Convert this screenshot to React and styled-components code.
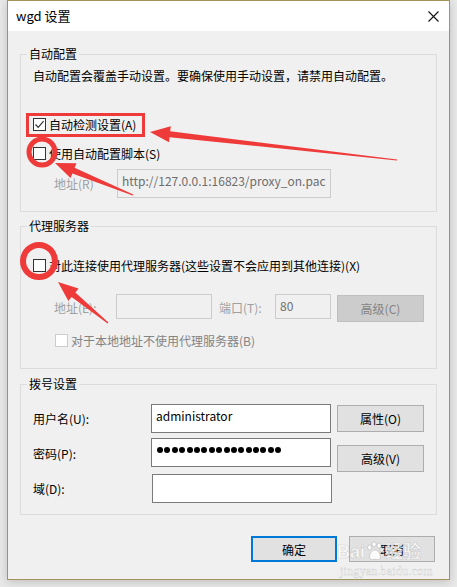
import styled, { createGlobalStyle } from 'styled-components';

const GlobalStyle = createGlobalStyle`
	html, body {
		margin: 0;
		padding: 0;
		background: #e9e9e9;
	}
	body {
		font-family: 'Segoe UI', 'Noto Sans CJK SC', sans-serif;
		font-size: 12px;
		color: #000;
	}
`;

const CheckBox = ({ checked, disabled }) => (
	<Box $disabled={disabled}>
		{checked ? (
			<svg width='11' height='11' viewBox='0 0 11 11'>
				<polyline points='1.5,5.5 4.2,8.3 9.6,2.2' fill='none' stroke='#333' strokeWidth='1.2' />
			</svg>
		) : null}
	</Box>
);

const App = () => {
	const dots = Array.from({ length: 17 });

	return (
		<>
			<GlobalStyle />
			<Page>
				<Window>
					<TitleBar>
						<Title>wgd 设置</Title>
						<Close>
							<svg width='11' height='11' viewBox='0 0 11 11'>
								<path d='M0.5,0.5 L10.5,10.5 M10.5,0.5 L0.5,10.5' stroke='#111' strokeWidth='1.1' />
							</svg>
						</Close>
					</TitleBar>
					<Body>
						<Group>
							<Legend>自动配置</Legend>
							<Note>自动配置会覆盖手动设置。要确保使用手动设置，请禁用自动配置。</Note>
							<CheckRow $top={32}>
								<CheckBox checked />
								自动检测设置(A)
							</CheckRow>
							<CheckRow $top={13}>
								<CheckBox />
								使用自动配置脚本(S)
							</CheckRow>
							<FieldRow $top={8}>
								<Label $indent={21} $width={63} $disabled>
									地址(R)
								</Label>
								<Field $width={214} $height={29} $disabled>
									http://127.0.0.1:16823/proxy_on.pac
								</Field>
							</FieldRow>
						</Group>

						<Group $top={6} $bottom={20}>
							<Legend>代理服务器</Legend>
							<CheckRow $top={23}>
								<CheckBox />
								对此连接使用代理服务器(这些设置不会应用到其他连接)(X)
							</CheckRow>
							<FieldRow $top={21}>
								<Label $indent={21} $width={63} $disabled>
									地址(E):
								</Label>
								<Field $width={96} $height={25} $disabled />
								<Label $indent={7} $width={57} $disabled>
									端口(T):
								</Label>
								<Field $width={56} $height={25} $disabled>
									80
								</Field>
								<Button $gap={6} $top={1} $disabled>
									高级(C)
								</Button>
							</FieldRow>
							<CheckRow $top={10} $indent={22} $disabled>
								<CheckBox disabled />
								对于本地地址不使用代理服务器(B)
							</CheckRow>
						</Group>

						<Group $top={7} $bottom={11}>
							<Legend>拨号设置</Legend>
							<FieldRow $top={12} $fixed>
								<Label $width={119}>用户名(U):</Label>
								<Field $width={180} $height={29}>
									administrator
								</Field>
								<Button $gap={6} $top={1}>
									属性(O)
								</Button>
							</FieldRow>
							<FieldRow $top={5} $fixed>
								<Label $width={119} $shift={2}>
									密码(P):
								</Label>
								<Field $width={180} $height={29}>
									<Dots>
										{dots.map((_, i) => (
											<Dot key={i} />
										))}
									</Dots>
								</Field>
								<Button $gap={6} $top={7}>
									高级(V)
								</Button>
							</FieldRow>
							<FieldRow $top={7} $fixed>
								<Label $width={119}>域(D):</Label>
								<Field $width={180} $height={29} />
							</FieldRow>
						</Group>

						<Footer>
							<DialogButton $primary>确定</DialogButton>
							<DialogButton>取消</DialogButton>
							<Watermark>
								<Brand>
									Bai
									<svg width='18' height='20' viewBox='0 0 20 22'>
										<g fill='rgba(255,255,255,0.85)' stroke='rgba(150,150,150,0.5)' strokeWidth='0.8'>
											<ellipse cx='4' cy='7' rx='2.3' ry='2.8' />
											<ellipse cx='9' cy='3.5' rx='2.3' ry='2.8' />
											<ellipse cx='14.5' cy='5' rx='2.3' ry='2.8' />
											<ellipse cx='17.5' cy='10' rx='2' ry='2.5' />
											<path d='M4,18 C4,12 8,10 10,10 C13,10 16,13 16,18 C16,21 13,21 10,20 C7,21 4,21 4,18 Z' />
										</g>
									</svg>
									经验
								</Brand>
								<Domain>jingyan.baidu.com</Domain>
							</Watermark>
						</Footer>
					</Body>
				</Window>

				<Marks width='457' height='587' viewBox='0 0 457 587'>
					<rect x='27.5' y='114.5' width='116' height='21' fill='none' stroke='#ef3a3a' strokeWidth='3' />
					<polygon
						fill='#ef3a3a'
						points='150,132 170.8,126.3 170.2,131.3 397.1,159.5 396.9,160.5 169.6,137.2 169,142.2'
					/>
					<circle cx='42' cy='152' r='13' fill='none' stroke='#ef3a3a' strokeWidth='5' />
					<polygon
						fill='#ef3a3a'
						points='55,163 76.5,163.2 74.6,167.8 133.3,194.4 132.7,195.6 72.4,173.4 70.5,178'
					/>
					<circle cx='39' cy='261' r='16' fill='none' stroke='#ef3a3a' strokeWidth='6' />
					<polygon
						fill='#ef3a3a'
						points='58,282 78.6,288.5 75.4,292.4 108.4,322.5 107.6,323.5 71.6,297 68.4,300.9'
					/>
				</Marks>
			</Page>
		</>
	);
};

const Page = styled.div`
	position: relative;
	width: 457px;
	height: 587px;
	overflow: hidden;
`;

const Window = styled.div`
	box-sizing: border-box;
	width: 443px;
	height: 580px;
	margin-left: 7px;
	border: 1px solid #a39458;
	background: #f0f0f0;
	box-shadow: 0 2px 9px rgba(0, 0, 0, 0.18);
	display: flex;
	flex-direction: column;
`;

const TitleBar = styled.div`
	height: 30px;
	background: #fff;
	display: flex;
	align-items: center;
	justify-content: space-between;
	padding: 0 10px 0 8px;
`;

const Title = styled.div`
	font-size: 13px;
	line-height: 16px;
	color: #000;
`;

const Close = styled.div`
	display: flex;
	align-items: center;
`;

const Body = styled.div`
	flex: 1;
	padding: 15px 12px 0 12px;
	display: flex;
	flex-direction: column;
`;

const Group = styled.fieldset`
	margin: ${({ $top }) => $top || 0}px 0 0 0;
	padding: 0 12px ${({ $bottom }) => ($bottom === undefined ? 13 : $bottom)}px 12px;
	border: 1px solid #dcdcdc;
	min-width: 0;
`;

const Legend = styled.legend`
	padding: 0 2px;
	margin-left: -6px;
	line-height: 16px;
	font-size: 12px;
	color: #000;
`;

const Note = styled.div`
	margin-top: 6px;
	line-height: 16px;
	white-space: nowrap;
`;

const CheckRow = styled.div`
	display: flex;
	align-items: center;
	gap: 3px;
	height: 16px;
	margin-top: ${({ $top }) => $top}px;
	margin-left: ${({ $indent }) => $indent || 0}px;
	white-space: nowrap;
	color: ${({ $disabled }) => ($disabled ? '#838383' : '#000')};
`;

const Box = styled.span`
	box-sizing: border-box;
	width: 13px;
	height: 13px;
	border: 1px solid ${({ $disabled }) => ($disabled ? '#cccccc' : '#333')};
	background: #fff;
	display: flex;
	align-items: center;
	justify-content: center;
	flex-shrink: 0;
`;

const FieldRow = styled.div`
	display: flex;
	align-items: ${({ $fixed }) => ($fixed ? 'center' : 'flex-start')};
	margin-top: ${({ $top }) => $top}px;
	height: ${({ $fixed }) => ($fixed ? '29px' : 'auto')};
`;

const Label = styled.div`
	box-sizing: border-box;
	width: ${({ $width }) => $width}px;
	margin-left: ${({ $indent }) => $indent || 0}px;
	padding-top: ${({ $shift }) => $shift || 0}px;
	align-self: center;
	line-height: 16px;
	white-space: nowrap;
	color: ${({ $disabled }) => ($disabled ? '#a0a0a0' : '#000')};
`;

const Field = styled.div`
	box-sizing: border-box;
	width: ${({ $width }) => $width}px;
	height: ${({ $height }) => $height}px;
	border: 1px solid ${({ $disabled }) => ($disabled ? '#cccccc' : '#7a7a7a')};
	background: ${({ $disabled }) => ($disabled ? '#f0f0f0' : '#fff')};
	color: ${({ $disabled }) => ($disabled ? '#6d6d6d' : '#000')};
	padding: 3px 0 0 4px;
	line-height: 16px;
	white-space: nowrap;
	overflow: hidden;
	align-self: flex-start;
	flex-shrink: 0;
`;

const Dots = styled.div`
	display: flex;
	gap: 1.4px;
	padding-top: 5px;
	padding-left: 1px;
`;

const Dot = styled.span`
	width: 6px;
	height: 6px;
	border-radius: 50%;
	background: #000;
`;

const Button = styled.div`
	box-sizing: border-box;
	width: 87px;
	height: 27px;
	margin-left: ${({ $gap }) => $gap}px;
	margin-top: ${({ $top }) => $top}px;
	align-self: flex-start;
	display: flex;
	align-items: center;
	justify-content: center;
	background: ${({ $disabled }) => ($disabled ? '#cccccc' : '#e1e1e1')};
	border: 1px solid ${({ $disabled }) => ($disabled ? '#bfbfbf' : '#adadad')};
	color: ${({ $disabled }) => ($disabled ? '#838383' : '#000')};
	flex-shrink: 0;
`;

const Footer = styled.div`
	position: relative;
	display: flex;
	justify-content: flex-end;
	gap: 12px;
	margin-top: 21px;
	margin-right: 2px;
`;

const DialogButton = styled.div`
	box-sizing: border-box;
	width: 86px;
	height: 26px;
	display: flex;
	align-items: center;
	justify-content: center;
	background: #e1e1e1;
	border: ${({ $primary }) => ($primary ? '2px solid #0078d7' : '1px solid #adadad')};
	color: #000;
`;

const Watermark = styled.div`
	position: absolute;
	left: 317px;
	top: 5px;
	display: flex;
	flex-direction: column;
	align-items: flex-start;
	pointer-events: none;
`;

const Brand = styled.div`
	display: flex;
	align-items: flex-end;
	font-family: 'Liberation Sans', 'Noto Sans CJK SC', sans-serif;
	font-size: 18px;
	font-weight: 700;
	line-height: 19px;
	color: rgba(255, 255, 255, 0.75);
	-webkit-text-stroke: 0.5px rgba(140, 140, 140, 0.4);
	svg {
		margin: 0 1px 1px 1px;
	}
`;

const Domain = styled.div`
	margin-left: 3px;
	margin-top: 2px;
	font-family: 'Liberation Serif', serif;
	font-size: 12px;
	line-height: 14px;
	color: rgba(255, 255, 255, 0.8);
	-webkit-text-stroke: 0.4px rgba(140, 140, 140, 0.4);
	letter-spacing: 0.2px;
`;

const Marks = styled.svg`
	position: absolute;
	left: 0;
	top: 0;
	pointer-events: none;
`;

export default App;
